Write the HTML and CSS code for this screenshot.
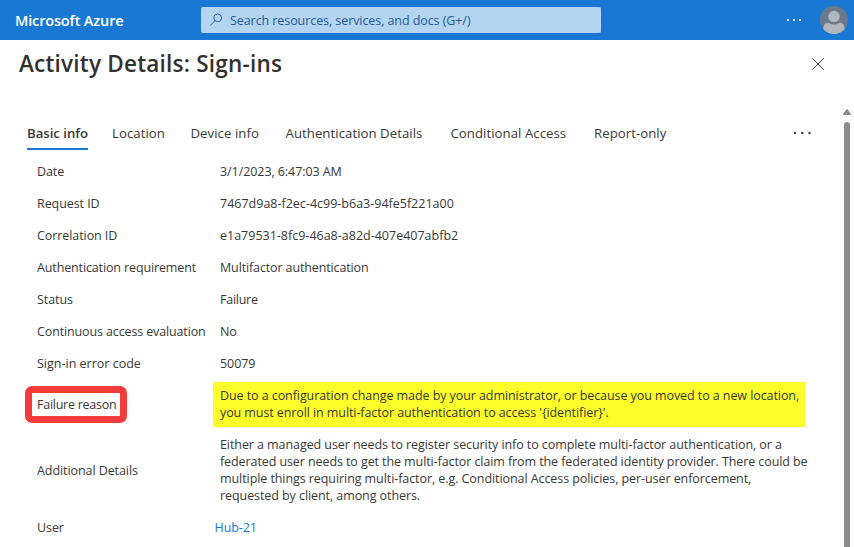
FILE: index.html
```html
<!DOCTYPE html>
<html lang="en">
<head>
<meta charset="utf-8">
<title>Activity Details: Sign-ins</title>
<link rel="stylesheet" href="styles.css">
</head>
<body>
<header class="topbar">
  <div class="brand">Microsoft Azure</div>
  <div class="search">
    <svg class="search-icon" width="14" height="14" viewBox="0 0 14 14" fill="none" stroke="#2b5f97"><circle cx="8.7" cy="4.9" r="3.9"/><path d="M6 7.7L1 12.7"/></svg>
    <span>Search resources, services, and docs (G+/)</span>
  </div>
  <svg class="top-more" width="16" height="4" viewBox="0 0 16 4" fill="#d9e9f9"><path d="M1 1h2v2H1zM7 1h2v2H7zM13 1h2v2h-2z"/></svg>
  <svg class="avatar" width="28" height="28" viewBox="0 0 28 28"><circle cx="14" cy="14" r="14" fill="#69798a"/><path d="M3.4 23.2C3.5 18.500 5 16.700 8.300 16.700Q14 20.500 19.700 16.700C23 16.700 24.500 18.500 24.600 23.200A14 14 0 0 1 3.400 23.200Z" fill="#b1b7bd"/><circle cx="14" cy="10.500" r="6.700" fill="#69798a"/><circle cx="14" cy="10.500" r="5.800" fill="#b1b7bd"/></svg>
</header>
<div class="title-row">
  <h1>Activity Details: Sign-ins</h1>
  <svg class="close" width="14" height="14" viewBox="0 0 14 14" stroke="#444" fill="none"><path d="M1.200 1.200L12.800 12.800M12.800 1.200L1.200 12.800"/></svg>
</div>
<main class="panel">
  <div class="content">
    <nav class="tabs">
      <a class="tab active">Basic info</a>
      <a class="tab">Location</a>
      <a class="tab">Device info</a>
      <a class="tab">Authentication Details</a>
      <a class="tab">Conditional Access</a>
      <a class="tab">Report-only</a>
      <svg class="tab-more" width="20" height="4" viewBox="0 0 20 4" fill="#444"><circle cx="2" cy="2" r="1.200"/><circle cx="9.300" cy="2" r="1.200"/><circle cx="16.500" cy="2" r="1.200"/></svg>
    </nav>
    <dl class="details">
      <dt>Date</dt><dd>3/1/2023, 6:47:03 AM</dd>
      <dt>Request ID</dt><dd class="guid">7467d9a8-f2ec-4c99-b6a3-94fe5f221a00</dd>
      <dt>Correlation ID</dt><dd class="guid">e1a79531-8fc9-46a8-a82d-407e407abfb2</dd>
      <dt class="tight">Authentication requirement</dt><dd class="tight">Multifactor authentication</dd>
      <dt>Status</dt><dd class="tighter">Failure</dd>
      <dt class="tight">Continuous access evaluation</dt><dd>No</dd>
      <dt class="guid">Sign-in error code</dt><dd>50079</dd>
      <dt class="marked tighter">Failure reason</dt>
      <dd class="highlight"><span>Due to a configuration change made by your administrator, or because you moved to a new location,</span><span class="fit">you must enroll in multi-factor authentication to access '{identifier}'.</span></dd>
      <dt>Additional Details</dt>
      <dd><span>Either a managed user needs to register security info to complete multi-factor authentication, or a</span><span class="fit">federated user needs to get the multi-factor claim from the federated identity provider. There could be</span><span>multiple things requiring multi-factor, e.g. Conditional Access policies, per-user enforcement,</span><span>requested by client, among others.</span></dd>
      <dt>User</dt><dd class="link">Hub-21</dd>
    </dl>
  </div>
  <div class="scrollbar">
    <svg width="8" height="6" viewBox="0 0 8 6" fill="#8b8b8b"><path d="M3.300.6Q4-.3 4.700.6L7.800 5Q8.200 6 7.300 6H.7Q-.2 6 .2 5Z"/></svg>
    <div class="thumb"></div>
  </div>
</main>
</body>
</html>
```
FILE: styles.css
```css
*, *::before { box-sizing: border-box; }
body { margin: 0; width: 854px; height: 547px; overflow: hidden; background: #fff; color: #393837; font: 12.5px/17px "Open Sans", "Noto Sans", sans-serif; letter-spacing: -0.075px; white-space: nowrap; }
svg { display: block; flex: none; }
.topbar { display: flex; align-items: center; height: 40px; background: #1878d4; padding: 0 6px 0 15px; }
.brand { width: 186px; color: #fff; font-size: 14.5px; font-weight: 600; letter-spacing: -0.15px; }
.search { display: flex; align-items: center; width: 400px; height: 26px; padding-left: 8px; gap: 7px; border-radius: 2px; background: #b4d5f2; color: #245a93; }
.top-more { margin-left: auto; margin-right: 18px; }
.title-row { display: flex; align-items: center; justify-content: space-between; height: 48px; padding: 0 29px 0 19px; }
h1 { margin: 0; font-size: 22.5px; line-height: 30px; font-weight: 600; letter-spacing: 0.22px; color: #323130; }
.panel { display: flex; height: 459px; }
.content { width: 840px; padding-top: 34px; }
.tabs { display: grid; grid-template-columns: 85px 78.5px 95px 165px 143.500px 198.500px 20px; height: 28px; padding-left: 27px; font-size: 13.2px; letter-spacing: 0.05px; }
.tab { padding-top: 3px; justify-self: start; }
.tab.active { width: 61px; font-weight: 600; letter-spacing: -0.03px; border-bottom: 2px solid #1878d4; }
.tab-more { margin-top: 8.500px; }
.details { display: grid; margin: 5px 0 0; grid-template-columns: 213px 1fr; grid-template-rows: repeat(7, 32px) 50px 82px 32px; }
dt, dd { display: flex; flex-direction: column; justify-content: center; align-items: flex-start; margin: 0; }
dt { padding-left: 37px; }
dd { padding-left: 7px; }
.fit { letter-spacing: -0.09px; }
.guid { letter-spacing: 0; }
.tight { letter-spacing: -0.13px; }
.tighter { letter-spacing: -0.26px; }
.highlight { width: 592px; height: 45px; margin-top: 3px; padding-bottom: 1px; background: #fdff2a; }
.marked { position: relative; }
.marked::before { content: ""; position: absolute; left: 25px; top: 7px; width: 102px; height: 37px; border: 7px solid #f43b3c; border-radius: 7px; }
.link { padding-left: 1.500px; color: #1878d4; }
.scrollbar { width: 14px; height: 443px; margin-top: 16px; padding: 5px 4px 0 3px; background: #fcfcfc; }
.thumb { width: 6px; height: 440px; margin: 7px 0 0 1px; border-radius: 3px 3px 0 0; background: #8b8b8b; }
```
